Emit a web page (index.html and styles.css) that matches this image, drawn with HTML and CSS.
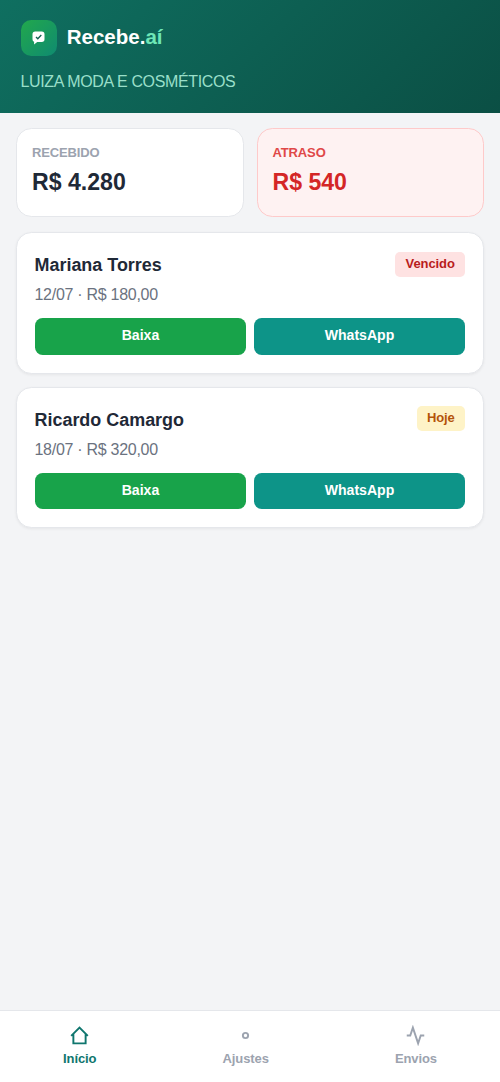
FILE: index.html
```html
<!DOCTYPE html>
<html lang="pt-BR">
<head>
<meta charset="utf-8">
<title>Recebe.aí</title>
<link rel="stylesheet" href="styles.css">
</head>
<body>
<div class="app">
  <header class="header">
    <div class="brand">
      <span class="logo">
        <svg class="logo-icon" viewBox="0 0 13 14">
          <path d="M3.200.5h6.600A2.700 2.700 0 0 1 12.500 3.200v5A2.700 2.700 0 0 1 9.800 10.900H5.200L2.100 13.500V10.800Q.5 10.200.5 8.200v-5A2.700 2.700 0 0 1 3.200.5z" fill="#fff"/>
          <path d="M4 6l1.800 1.800L9.300 4" fill="none" stroke="#0f5f50" stroke-width="1.300"/>
        </svg>
      </span>
      <span class="brand-name">Recebe.<span class="brand-accent">aí</span></span>
    </div>
    <div class="store">LUIZA MODA E COSMÉTICOS</div>
  </header>
  <main class="content">
    <section class="summary">
      <div class="stat">
        <div class="stat-label">RECEBIDO</div>
        <div class="stat-value">R$ 4.280</div>
      </div>
      <div class="stat stat-late">
        <div class="stat-label">ATRASO</div>
        <div class="stat-value">R$ 540</div>
      </div>
    </section>
    <article class="card">
      <div class="card-head">
        <div class="name">Mariana Torres</div>
        <span class="badge badge-late">Vencido</span>
      </div>
      <div class="detail">12/07 · R$ 180,00</div>
      <div class="actions">
        <button class="btn">Baixa</button>
        <button class="btn btn-whatsapp">WhatsApp</button>
      </div>
    </article>
    <article class="card">
      <div class="card-head">
        <div class="name">Ricardo Camargo</div>
        <span class="badge badge-today">Hoje</span>
      </div>
      <div class="detail">18/07 · R$ 320,00</div>
      <div class="actions">
        <button class="btn">Baixa</button>
        <button class="btn btn-whatsapp">WhatsApp</button>
      </div>
    </article>
  </main>
  <nav class="nav">
    <a class="tab tab-active">
      <svg class="tab-icon" viewBox="0 0 24 24"><path d="M2.500 12.500L12 3l9.500 9.500M5 10v11h14V10"/></svg>
      Início
    </a>
    <a class="tab">
      <svg class="tab-icon" viewBox="0 0 24 24"><circle cx="12" cy="12" r="3"/></svg>
      Ajustes
    </a>
    <a class="tab">
      <svg class="tab-icon" viewBox="0 0 24 24"><path d="M22 12h-4l-3 9L9 3l-3 9H2"/></svg>
      Envios
    </a>
  </nav>
</div>
</body>
</html>
```
FILE: styles.css
```css
* { box-sizing: border-box; }
body { margin: 0; font-family: "Liberation Sans", Arial, sans-serif; }
.app { display: flex; flex-direction: column; height: 1082px; background: #f3f4f6; }

.header {
  height: 112.800px;
  padding: 20px 20.500px;
  background: linear-gradient(135deg, #0f6f60, #0b4f44);
}
.brand { display: flex; align-items: center; gap: 10.250px; }
.logo {
  display: flex;
  align-items: center;
  justify-content: center;
  width: 36px;
  height: 36px;
  border-radius: 10.250px;
  background: linear-gradient(135deg, #22a84c, #0f8b70);
}
.logo-icon { width: 13px; height: 14px; }
.brand-name { font-size: 20.500px; line-height: 24px; font-weight: 700; color: #fff; margin-top: -2px; }
.brand-accent { color: #6ee7b7; }
.store { margin-top: 17px; font-size: 16px; line-height: 18px; letter-spacing: -0.360px; color: #99dfc9; }

.content { flex: 1; padding: 15.400px 16px; }
.summary { display: grid; grid-template-columns: 1fr 1fr; gap: 13px; }
.stat {
  height: 88.500px;
  padding: 16px 15px;
  border: 1.300px solid #e5e7eb;
  border-radius: 15.400px;
  background: #fff;
}
.stat-label { font-size: 13px; line-height: 15px; letter-spacing: -0.130px; font-weight: 700; color: #9ca3af; }
.stat-value { margin-top: 9px; font-size: 23.100px; line-height: 27px; font-weight: 700; color: #1f2937; }
.stat-late { background: #fef2f2; border-color: #fecaca; }
.stat-late .stat-label { color: #e04848; }
.stat-late .stat-value { color: #d42626; }

.card {
  margin-top: 15.400px;
  height: 142px;
  padding: 19px 18px 0;
  border: 1.300px solid #e5e7eb;
  border-radius: 15.400px;
  background: #fff;
  box-shadow: 0 1px 3px rgba(0, 0, 0, 0.060);
}
.card + .card { margin-top: 12.800px; height: 141px; }
.card-head { display: flex; justify-content: space-between; align-items: center; height: 25px; }
.name { margin-left: -0.500px; font-size: 17.950px; line-height: 22px; font-weight: 700; color: #1f2937; }
.card + .card .name { padding-top: 1px; }
.badge {
  padding: 0 10.250px;
  border-radius: 5px;
  font-size: 13px;
  letter-spacing: -0.100px;
  line-height: 24.500px;
  font-weight: 700;
}
.badge-late { background: #fee2e2; color: #b91c1c; }
.badge-today { margin-top: -2px; background: #fef3c7; color: #b45309; }
.detail { margin: 8px 0 0 -0.500px; font-size: 16px; line-height: 20px; letter-spacing: -0.280px; color: #6b7280; }
.actions { display: grid; grid-template-columns: 1fr 1fr; gap: 8px; margin-top: 13px; }
.btn {
  height: 36.500px;
  padding: 0 0 2px;
  border: 0;
  border-radius: 7.700px;
  background: #18a34a;
  color: #fff;
  font: 700 14.100px "Liberation Sans", Arial, sans-serif;
}
.btn-whatsapp { background: #0d9488; }

.nav {
  display: flex;
  justify-content: space-around;
  height: 72px;
  padding-top: 14px;
  border-top: 1.300px solid #e5e7eb;
  background: #fff;
}
.tab {
  display: flex;
  flex-direction: column;
  align-items: center;
  gap: 4px;
  font-size: 13px;
  letter-spacing: -0.100px;
  line-height: 17px;
  font-weight: 700;
  color: #9ca3af;
}
.tab-active { color: #0f766e; }
.tab-icon { width: 21px; height: 21px; fill: none; stroke: currentColor; stroke-width: 2.200; }
```
